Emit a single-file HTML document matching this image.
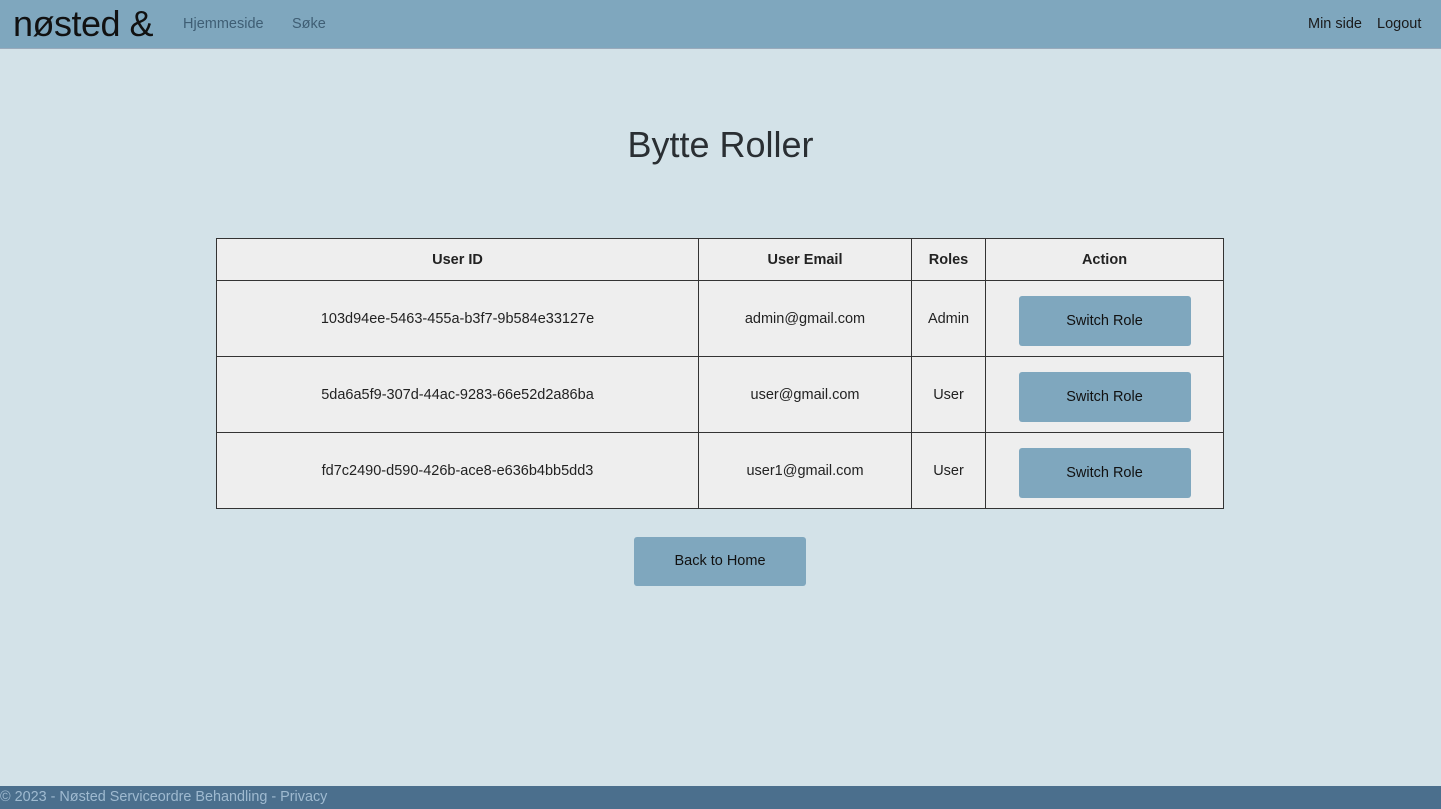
<!DOCTYPE html>
<html><head><meta charset="utf-8"><style>
*{box-sizing:border-box;margin:0;padding:0}
body{width:1441px;height:809px;background:#d3e2e8;font-family:"Liberation Sans",sans-serif;position:relative;overflow:hidden;color:#222}
.hdr{position:absolute;left:0;top:0;width:1441px;height:49px;background:#7fa7be;border-bottom:1px solid #9ab}
.logo{position:absolute;left:13px;top:3px;font-size:36px;color:#111;letter-spacing:-0.5px}
.nav{position:absolute;top:16px;font-size:14.5px;color:#3f5e74}
.navr{position:absolute;top:16px;font-size:14.5px;color:#1a1a1a}
h1{position:absolute;left:0;width:1441px;top:124px;text-align:center;font-weight:normal;font-size:36px;color:#2a2f33}
table{position:absolute;left:216px;top:238px;width:1008px;border-collapse:collapse;background:#eeeeee;font-size:14.5px}
td,th{border:1px solid #333;text-align:center}
th{height:42px;font-weight:bold}
td{height:76px}
.btn{display:inline-block;width:172px;height:50px;line-height:50px;background:#7fa7be;border-radius:3px;color:#111;font-size:14.5px;position:relative;top:2px}
.back{position:absolute;left:634px;top:537px;width:172px;height:49px;line-height:49px;text-align:center;background:#7fa7be;border-radius:3px;font-size:14.5px;color:#111}
.ftr{position:absolute;left:0;top:786px;width:1441px;height:23px;background:#4b6f8d;color:#9fbad0;font-size:14.4px;line-height:23px}
</style></head><body>
<div class="hdr">
<div class="logo">nøsted &amp;</div>
<div class="nav" style="left:183px">Hjemmeside</div>
<div class="nav" style="left:292px">Søke</div>
<div class="navr" style="left:1308px">Min side</div>
<div class="navr" style="left:1377px">Logout</div>
</div>
<h1>Bytte Roller</h1>
<table>
<tr><th style="width:482px">User ID</th><th style="width:213px">User Email</th><th style="width:74px">Roles</th><th>Action</th></tr>
<tr><td>103d94ee-5463-455a-b3f7-9b584e33127e</td><td>admin@gmail.com</td><td>Admin</td><td><span class="btn">Switch Role</span></td></tr>
<tr><td>5da6a5f9-307d-44ac-9283-66e52d2a86ba</td><td>user@gmail.com</td><td>User</td><td><span class="btn">Switch Role</span></td></tr>
<tr><td>fd7c2490-d590-426b-ace8-e636b4bb5dd3</td><td>user1@gmail.com</td><td>User</td><td><span class="btn">Switch Role</span></td></tr>
</table>
<div class="back">Back to Home</div>
<div class="ftr">© 2023 - Nøsted Serviceordre Behandling - Privacy</div>
</body></html>
